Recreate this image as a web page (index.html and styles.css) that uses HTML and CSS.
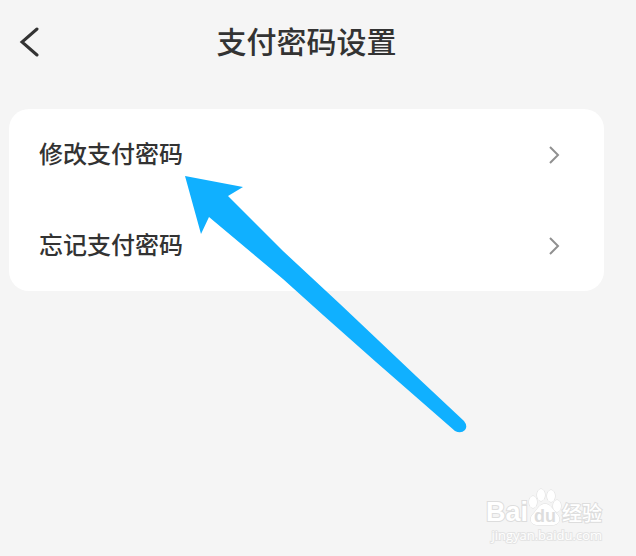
FILE: index.html
```
<!DOCTYPE html>
<html lang="zh-CN">
<head>
    <meta charset="UTF-8">
    <meta name="viewport" content="width=device-width, initial-scale=1.0">
    <title>支付密码设置</title>
    <link rel="stylesheet" href="styles.css">
</head>
<body>
    <header class="topbar">
        <button type="button" class="back" aria-label="返回">
            <svg width="20" height="32" viewBox="0 0 20 32">
                <path d="M18 3L3 16L18 29" />
            </svg>
        </button>
        <h1>支付密码设置</h1>
    </header>

    <main class="card">
        <a class="item" href="#modify">
            <span>修改支付密码</span>
            <svg class="chevron" width="12" height="18" viewBox="0 0 12 18">
                <path d="M2 1L10 9L2 17" />
            </svg>
        </a>
        <a class="item" href="#forgot">
            <span>忘记支付密码</span>
            <svg class="chevron" width="12" height="18" viewBox="0 0 12 18">
                <path d="M2 1L10 9L2 17" />
            </svg>
        </a>
        <svg class="arrow" width="284" height="260" viewBox="0 0 284 260">
            <path d="M1 1L59 12L44 21L99 76L156 129L232 201L280 246Q284 251 281 255Q277 259 271 256L192 187L139 140L99 104L25 42L17 59Z" />
        </svg>
    </main>

    <div class="watermark">
        <div class="logo">
            <span class="bai">Bai</span>
            <span class="paw">
                <svg width="34" height="38" viewBox="0 0 34 38">
                    <ellipse cx="5" cy="14" rx="4" ry="6" />
                    <ellipse cx="13" cy="7" rx="4" ry="6" />
                    <ellipse cx="23" cy="8" rx="4" ry="6" />
                    <ellipse cx="29" cy="18" rx="4" ry="6" />
                    <path d="M17 16C11 16 10 21 5 26C1 30 2 37 10 37L24 37C32 37 33 30 29 26C24 21 23 16 17 16Z" />
                </svg>
                <span class="du">du</span>
            </span>
            <span class="jingyan">经验</span>
        </div>
        <div class="site">jingyan.baidu.com</div>
    </div>
</body>
</html>
```
FILE: styles.css
```
*{
    box-sizing: border-box;
}
body{
    margin: 0;
    padding: 0 32px 0 9px;
    min-height: 100vh;
    position: relative;
    background-color: #f5f5f5;
    color: #333;
    font-family: "Noto Sans CJK SC", sans-serif;
}
svg{
    display: block;
}
.topbar{
    display: grid;
    grid-template-columns: 40px 1fr 40px;
    align-items: center;
    height: 84px;
    margin-bottom: 25px;
}
.back{
    border: none;
    background: none;
    padding: 0 0 0 10px;
    cursor: pointer;
}
.back path{
    fill: none;
    stroke: #333;
    stroke-width: 3;
    stroke-linecap: round;
}
h1{
    margin: 0;
    padding-bottom: 4px;
    font-size: 30px;
    font-weight: 500;
    line-height: 40px;
    text-align: center;
}
.card{
    position: relative;
    background-color: #fff;
    border-radius: 20px;
}
.item{
    display: flex;
    justify-content: space-between;
    align-items: center;
    height: 91px;
    padding: 0 44px 0 30px;
    color: #333;
    font-size: 24px;
    font-weight: 500;
    text-decoration: none;
}
.item span{
    padding-bottom: 4px;
}
.chevron path{
    fill: none;
    stroke: #909090;
    stroke-width: 2;
}
.arrow{
    position: absolute;
    top: 66px;
    left: 175px;
    fill: #10b0ff;
    pointer-events: none;
}
.watermark{
    position: absolute;
    right: 34px;
    bottom: 12px;
    color: #fff;
    -webkit-text-stroke: 2px #ddd;
    paint-order: stroke;
}
.logo{
    display: flex;
    align-items: flex-end;
    height: 38px;
}
.bai{
    font-family: "Liberation Sans", sans-serif;
    font-size: 27px;
    font-weight: bold;
    line-height: 28px;
}
.paw{
    position: relative;
}
.paw svg{
    fill: #fff;
    stroke: #ddd;
}
.du{
    position: absolute;
    left: 0;
    right: 0;
    bottom: 0;
    text-align: center;
    color: #ddd;
    font-family: "Liberation Sans", sans-serif;
    font-size: 18px;
    font-weight: bold;
    line-height: 20px;
    -webkit-text-stroke: 0;
}
.jingyan{
    font-size: 20px;
    font-weight: 500;
    line-height: 26px;
}
.site{
    color: #fff;
    font-family: "Open Sans", sans-serif;
    font-size: 13px;
    line-height: 18px;
    text-align: right;
    -webkit-text-stroke: 2px #e4e4e4;
}
```
